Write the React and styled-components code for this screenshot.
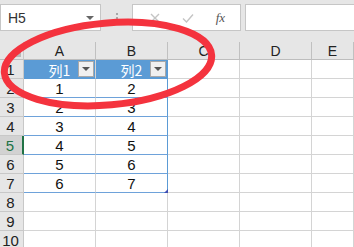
import React from 'react';
import styled, { createGlobalStyle } from 'styled-components';

const GlobalStyle = createGlobalStyle`
  html, body {
    margin: 0;
    padding: 0;
    background: #fff;
  }
  body {
    font-family: "Liberation Sans", "Noto Sans CJK SC", sans-serif;
    overflow: hidden;
  }
`;

const Screen = styled.div`
  position: relative;
  width: 354px;
  height: 247px;
  overflow: hidden;
  background: #fff;
`;

const Toolbar = styled.div`
  display: flex;
  align-items: flex-start;
  height: 42px;
  padding-top: 4px;
  box-sizing: border-box;
  background: #e6e6e6;
`;

const NameBox = styled.div`
  display: flex;
  align-items: center;
  justify-content: space-between;
  width: 101px;
  height: 27px;
  box-sizing: border-box;
  padding: 0 6px 0 7px;
  border: 1px solid #c6c6c6;
  background: #fff;
  font-size: 14px;
  color: #333;
`;

const Caret = styled.span`
  width: 0;
  height: 0;
  border-left: 4px solid transparent;
  border-right: 4px solid transparent;
  border-top: 4px solid ${(p) => p.color || '#666'};
`;

const Grip = styled.div`
  display: flex;
  flex-direction: column;
  align-items: center;
  gap: 2px;
  width: 31px;
  padding-top: 9px;

  span {
    width: 2px;
    height: 2px;
    background: #a8a8a8;
  }
`;

const FormulaTools = styled.div`
  display: flex;
  align-items: center;
  justify-content: space-around;
  width: 109px;
  height: 27px;
  box-sizing: border-box;
  padding: 0 4px 0 6px;
  border: 1px solid #c6c6c6;
  background: #fff;
`;

const Fx = styled.span`
  font-family: "Liberation Serif", serif;
  font-style: italic;
  font-size: 13px;
  color: #555;
`;

const FormulaInput = styled.div`
  flex: 1;
  height: 27px;
  margin-left: 4px;
  box-sizing: border-box;
  border: 1px solid #c6c6c6;
  border-right: none;
  background: #fff;
`;

const Sheet = styled.div`
  display: grid;
  grid-template-columns: 24px 72px 72px 72px 72px 1fr;
  grid-template-rows: 18px repeat(10, 19px);
`;

const Corner = styled.div`
  position: relative;
  background: #e6e6e6;
  border-right: 1px solid #c8c8c8;
  border-bottom: 1px solid #bdbdbd;

  &::after {
    content: '';
    position: absolute;
    right: 2px;
    bottom: 2px;
    border-left: 10px solid transparent;
    border-bottom: 10px solid #b8b8b8;
  }
`;

const ColHeader = styled.div`
  display: flex;
  align-items: center;
  justify-content: center;
  background: #e6e6e6;
  border-right: 1px solid #c0c0c0;
  border-bottom: 1px solid #bdbdbd;
  font-size: 14px;
  color: #222;
`;

const RowHeader = styled.div`
  display: flex;
  align-items: center;
  justify-content: center;
  box-sizing: border-box;
  padding: 1px 2px 0 0;
  background: ${(p) => (p.$active ? '#d2d2d2' : '#e6e6e6')};
  border-right: ${(p) => (p.$active ? '2px solid #217346' : '1px solid #c8c8c8')};
  border-bottom: 1px solid #c8c8c8;
  font-size: 15px;
  color: ${(p) => (p.$active ? '#217346' : '#222')};
`;

const Cell = styled.div`
  position: relative;
  display: flex;
  align-items: center;
  justify-content: center;
  box-sizing: border-box;
  padding-top: 1px;
  font-size: 15px;
  color: #111;
  background: ${(p) => (p.$head ? '#5b9bd5' : '#fff')};
  border-right: 1px solid ${(p) => (p.$edge ? '#5b9bd5' : '#d4d4d4')};
  border-bottom: 1px solid ${(p) => (p.$head ? '#5b9bd5' : p.$table ? '#6ea2da' : '#d4d4d4')};
`;

const HeadText = styled.span`
  color: #fff;
  font-family: "Noto Sans CJK SC", "Liberation Sans", sans-serif;
  font-size: 14px;
  line-height: 1;
`;

const FilterButton = styled.span`
  position: absolute;
  top: 1px;
  right: 1px;
  display: flex;
  align-items: center;
  justify-content: center;
  width: 16px;
  height: 16px;
  box-sizing: border-box;
  border: 1px solid #a9a9a9;
  background: #f0f0f0;
`;

const ResizeHandle = styled.span`
  position: absolute;
  right: -1px;
  bottom: -1px;
  border-left: 4px solid transparent;
  border-bottom: 4px solid #3f4fb3;
`;

const Annotation = styled.svg`
  position: absolute;
  top: 0;
  left: 0;
  pointer-events: none;
`;

const data = [
  [1, 2],
  [2, 3],
  [3, 4],
  [4, 5],
  [5, 6],
  [6, 7],
];

const columns = ['A', 'B', 'C', 'D', 'E'];

function App() {
  const rows = [];
  for (let r = 1; r <= 10; r++) {
    const isHead = r === 1;
    const values = data[r - 2];
    const inTable = r <= 7;
    rows.push(
      <RowHeader key={`h${r}`} $active={r === 5}>
        {r}
      </RowHeader>
    );
    columns.forEach((c, i) => {
      const tableCol = i < 2 && inTable;
      rows.push(
        <Cell
          key={`${c}${r}`}
          $head={tableCol && isHead}
          $table={tableCol}
          $edge={tableCol && i === 1}
        >
          {tableCol && isHead && (
            <>
              <HeadText>{`列${i + 1}`}</HeadText>
              <FilterButton>
                <Caret color="#555" />
              </FilterButton>
            </>
          )}
          {tableCol && !isHead && values[i]}
          {tableCol && i === 1 && r === 7 && <ResizeHandle />}
        </Cell>
      );
    });
  }

  return (
    <Screen>
      <GlobalStyle />
      <Toolbar>
        <NameBox>
          H5
          <Caret />
        </NameBox>
        <Grip>
          <span />
          <span />
          <span />
        </Grip>
        <FormulaTools>
          <svg width="10" height="10" viewBox="0 0 10 10">
            <path d="M1 1L9 9M9 1L1 9" stroke="#c4c4c4" strokeWidth="1.4" fill="none" />
          </svg>
          <svg width="12" height="10" viewBox="0 0 12 10">
            <path d="M1 5.5L4.5 9L11 1.5" stroke="#c4c4c4" strokeWidth="1.4" fill="none" />
          </svg>
          <Fx>fx</Fx>
        </FormulaTools>
        <FormulaInput />
      </Toolbar>
      <Sheet>
        <Corner />
        {columns.map((c) => (
          <ColHeader key={c}>{c}</ColHeader>
        ))}
        {rows}
      </Sheet>
      <Annotation width="354" height="247" viewBox="0 0 354 247">
        <ellipse
          cx="108"
          cy="64"
          rx="104"
          ry="41"
          transform="rotate(-5 108 64)"
          fill="none"
          stroke="#f4333e"
          strokeWidth="7"
        />
      </Annotation>
    </Screen>
  );
}

export default App;
